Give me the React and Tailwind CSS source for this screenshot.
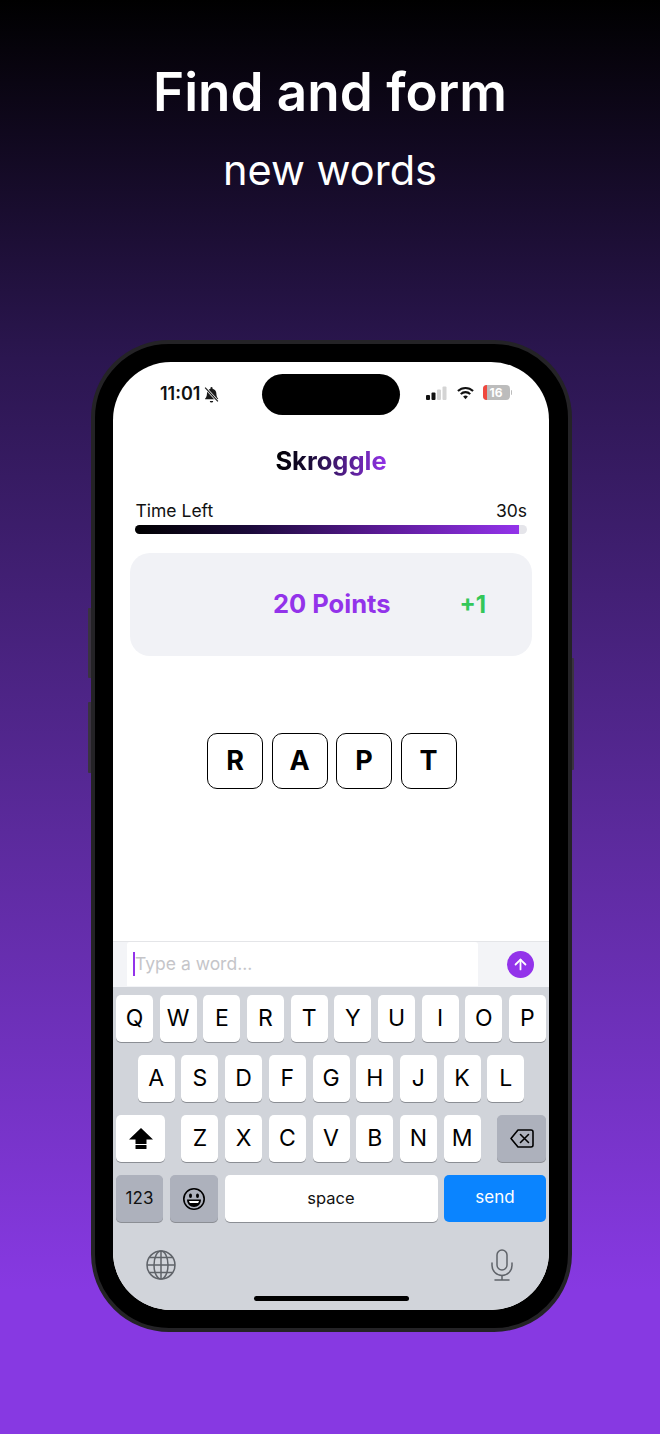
import React from 'react';
import { ArrowUp } from 'lucide-react';

const row1 = ['Q', 'W', 'E', 'R', 'T', 'Y', 'U', 'I', 'O', 'P'];
const row2 = ['A', 'S', 'D', 'F', 'G', 'H', 'J', 'K', 'L'];
const row3 = ['Z', 'X', 'C', 'V', 'B', 'N', 'M'];
const tiles = ['R', 'A', 'P', 'T'];

function Key({ label }) {
  return (
    <div className="w-[37px] h-[47px] rounded-[5px] bg-white shadow-[0_1px_0_#8b8e94] flex items-center justify-center text-[23px] leading-none text-black">
      {label}
    </div>
  );
}

function StatusBar() {
  return (
    <div className="relative h-[64px] flex items-start justify-between pt-[21px] pl-[47px] pr-[37px] shrink-0">
      <div className="flex items-center gap-[3px]">
        <span className="text-[18px] leading-[22px] font-semibold text-[#111]">11:01</span>
        <svg className="shrink-0" width="17" height="17" viewBox="0 0 16 16" fill="#1a1a1a">
          <path d="M8 1a1 1 0 0 1 1 1v.6c2.200.5 3.600 2.300 3.600 4.700 0 2.200.6 3.500 1.600 4.500v.7H2v-.7c1-1 1.700-2.300 1.700-4.500C3.700 4.900 5 3.100 7 2.600V2a1 1 0 0 1 1-1z" />
          <path d="M6.400 14h3.200a1.600 1.600 0 0 1-3.200 0z" />
          <path d="M2 1.500l12 13" stroke="#fff" strokeWidth="2.400" />
          <path d="M2 1.500l12 13" stroke="#1a1a1a" strokeWidth="1.100" />
        </svg>
      </div>
      <div className="absolute left-[149px] top-[12px] w-[138px] h-[41px] rounded-full bg-black" />
      <div className="flex items-center pt-[2px]">
        <svg width="21" height="14" viewBox="0 0 21 14">
          <rect x="0" y="9" width="4" height="5" rx="1" fill="#111" />
          <rect x="5.500" y="6.500" width="4" height="7.500" rx="1" fill="#111" />
          <rect x="11" y="3.500" width="4" height="10.500" rx="1" fill="#d4d4d4" />
          <rect x="16.500" y="0.500" width="4" height="13.500" rx="1" fill="#d4d4d4" />
        </svg>
        <svg className="ml-[10px]" width="17" height="14" viewBox="0 0 18 14" fill="none" stroke="#111" strokeWidth="2.200">
          <path d="M1 5a11.500 11.500 0 0 1 16 0" />
          <path d="M4 8.200a7 7 0 0 1 10 0" />
          <path d="M9 13.500l-2.500-2.700a3.500 3.500 0 0 1 5 0z" fill="#111" stroke="none" />
        </svg>
        <div className="flex items-center ml-[9px]">
          <div className="w-[27px] h-[15px] rounded-[4px] bg-[#bcbcbc] overflow-hidden relative flex items-center justify-center">
            <div className="absolute left-0 top-0 bottom-0 w-[4px] bg-[#f0483e]" />
            <span className="relative text-[12px] leading-none font-bold text-white">16</span>
          </div>
          <div className="w-[1.500px] h-[5px] rounded-r-full bg-[#bcbcbc] ml-[1px]" />
        </div>
      </div>
    </div>
  );
}

function Keyboard() {
  return (
    <div className="h-[323px] shrink-0 bg-[#d1d4da] flex flex-col px-[3px] pt-[8px]">
      <div className="flex justify-between">
        {row1.map((k) => <Key key={k} label={k} />)}
      </div>
      <div className="flex justify-center gap-[6.700px] mt-[13px]">
        {row2.map((k) => <Key key={k} label={k} />)}
      </div>
      <div className="flex justify-between mt-[13px]">
        <div className="w-[49px] h-[47px] rounded-[5px] bg-white shadow-[0_1px_0_#8b8e94] flex items-center justify-center">
          <svg width="24" height="21" viewBox="0 0 24 21" fill="#000">
            <path d="M12 0L24 11.500H17.500V16H6.500V11.500H0z" />
            <rect x="6.500" y="17" width="11" height="4" rx="0.500" />
          </svg>
        </div>
        <div className="flex gap-[6.700px]">
          {row3.map((k) => <Key key={k} label={k} />)}
        </div>
        <div className="w-[49px] h-[47px] rounded-[5px] bg-[#adb1bc] shadow-[0_1px_0_#8b8e94] flex items-center justify-center">
          <svg width="24" height="19" viewBox="0 0 24 19" fill="none" stroke="#000" strokeWidth="1.600" strokeLinejoin="round" strokeLinecap="round">
            <path d="M8 1h13a2 2 0 0 1 2 2v13a2 2 0 0 1-2 2H8L1 9.500z" />
            <path d="M10.500 5.500l8 8M18.500 5.500l-8 8" />
          </svg>
        </div>
      </div>
      <div className="flex justify-between mt-[13px]">
        <div className="flex gap-[7px]">
          <div className="w-[47px] h-[47px] rounded-[5px] bg-[#adb1bc] shadow-[0_1px_0_#8b8e94] flex items-center justify-center text-[17px] text-[#111]">123</div>
          <div className="w-[48px] h-[47px] rounded-[5px] bg-[#adb1bc] shadow-[0_1px_0_#8b8e94] flex items-center justify-center">
            <svg width="24" height="24" viewBox="0 0 24 24">
              <circle cx="12" cy="12" r="10.200" fill="none" stroke="#000" strokeWidth="1.600" />
              <ellipse cx="8.500" cy="8.800" rx="1.500" ry="2.200" fill="#000" />
              <ellipse cx="15.500" cy="8.800" rx="1.500" ry="2.200" fill="#000" />
              <path d="M5 12.500h14c0 4.500-3 7.500-7 7.500s-7-3-7-7.500z" fill="#000" />
              <path d="M7 14h10c-.3 1-.6 1.500-1 2H8c-.4-.5-.7-1-1-2z" fill="#fff" />
            </svg>
          </div>
        </div>
        <div className="w-[213px] h-[47px] rounded-[5px] bg-white shadow-[0_1px_0_#8b8e94] flex items-center justify-center text-[16.500px] text-[#111] pb-[1px]">space</div>
        <div className="w-[102px] h-[47px] rounded-[5px] bg-[#0a84ff] flex items-center justify-center text-[17px] text-white pb-[1px]">send</div>
      </div>
      <div className="flex justify-between items-center pl-[29px] pr-[33px] mt-[27px]">
        <svg width="32" height="32" viewBox="0 0 32 32" fill="none" stroke="#5f6369" strokeWidth="1.500">
          <circle cx="16" cy="16" r="14" />
          <ellipse cx="16" cy="16" rx="7" ry="14" />
          <path d="M16 2v28M2 16h28M4.500 8.500h23M4.500 23.500h23" />
        </svg>
        <svg width="22" height="32" viewBox="0 0 22 32" fill="none" stroke="#5f6369" strokeWidth="1.500" strokeLinecap="round">
          <rect x="6" y="1" width="10" height="20" rx="5" />
          <path d="M1 14v2.500a10 10 0 0 0 20 0V14" />
          <path d="M11 26.500V31M4 31h14" />
        </svg>
      </div>
      <div className="w-[155px] h-[5px] rounded-full bg-black self-center mt-[15px]" />
    </div>
  );
}

export default function App() {
  return (
    <div className="w-[660px] h-[1434px] overflow-hidden flex flex-col items-center bg-[linear-gradient(180deg,#000_0%,#2b1650_25%,#5b2a9c_58%,#8739e2_90%,#8739e2_100%)] font-['Inter',sans-serif]">
      <h1 className="mt-[60px] text-[53px] leading-[64px] font-semibold text-white">Find and form</h1>
      <p className="mt-[20px] text-[41.500px] leading-[52px] text-white">new words</p>

      {/* phone */}
      <div className="relative mt-[144px] ml-[3px] w-[481px] h-[992px] rounded-[78px] bg-black border-[4px] border-[#242326] pl-[18px] pr-[19px] py-[18px] shrink-0">
        <div className="absolute -left-[7px] top-[264px] w-[3px] h-[70px] rounded-l-[1px] bg-[#3a3340]" />
        <div className="absolute -left-[7px] top-[358px] w-[3px] h-[71px] rounded-l-[1px] bg-[#3a3340]" />
        <div className="absolute -right-[6px] top-[314px] w-[2px] h-[112px] rounded-r-[1px] bg-[#3a3340]" />
        <div className="w-full h-full rounded-[58px] bg-white overflow-hidden flex flex-col">
          <StatusBar />
          <div className="text-center text-[25.500px] leading-[32px] font-bold mt-[19px]">
            <span className="bg-[linear-gradient(90deg,#000_0%,#170a33_30%,#9333ea_100%)] bg-clip-text text-transparent">Skroggle</span>
          </div>
          <div className="flex justify-between pl-[22.500px] pr-[22px] mt-[22px] text-[17.500px] leading-[24px] text-[#111]">
            <span>Time Left</span>
            <span>30s</span>
          </div>
          <div className="mx-[22px] mt-[2px] h-[9px] rounded-full bg-[#e5e5ea] overflow-hidden shrink-0">
            <div className="h-full w-[98%] bg-[linear-gradient(90deg,#000_0%,#1b0a3a_30%,#5c1a98_65%,#9333ea_100%)]" />
          </div>
          <div className="mx-[17px] mt-[19px] h-[103px] rounded-[20px] bg-[#f1f2f6] flex items-center shrink-0">
            <span className="ml-[143px] text-[25.500px] font-bold text-[#9333ea]">20 Points</span>
            <span className="ml-[69px] text-[24px] font-bold text-[#34c759]">+1</span>
          </div>
          <div className="flex-1 flex items-start justify-center gap-[8.500px] pt-[77px] pl-[1.500px]">
            {tiles.map((t) => (
              <div key={t} className="w-[56px] h-[56px] rounded-[10px] border border-black bg-white flex items-center justify-center text-[27px] font-bold text-black">
                {t}
              </div>
            ))}
          </div>
          <div className="h-[46px] bg-[#f3f4f7] flex items-center pl-[14px] pr-[15px] border-t border-[#e4e5e8] shrink-0">
            <div className="w-[351px] h-[44px] rounded-t-[3px] bg-white flex items-center pl-[6px] self-start">
              <div className="w-[2px] h-[24px] bg-[#9333ea]" />
              <span className="text-[17.500px] text-[#c5c5c9]">Type a word...</span>
            </div>
            <div className="ml-auto w-[27px] h-[27px] rounded-full bg-[#9333ea] flex items-center justify-center">
              <ArrowUp size={17} strokeWidth={2.500} color="#fff" />
            </div>
          </div>
          <Keyboard />
        </div>
      </div>
    </div>
  );
}
